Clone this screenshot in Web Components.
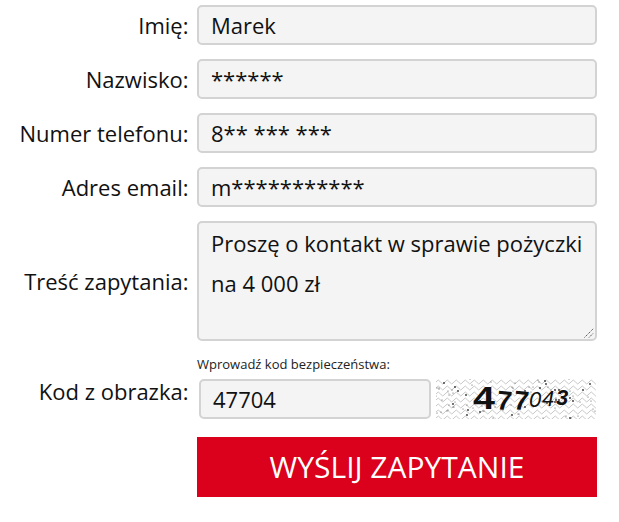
<!DOCTYPE html>
<html lang="pl">
<head>
<meta charset="utf-8">
<style>
  html, body { margin: 0; background: #fff; }
  body { font-family: "Open Sans", sans-serif; color: #111; }
</style>
</head>
<body>
<contact-form></contact-form>

<script>
class FormRow extends HTMLElement {
  constructor() {
    super();
    this.attachShadow({ mode: "open" });
    this.shadowRoot.innerHTML = `
      <style>
        :host { display: grid; grid-template-columns: 188.5px 400px; column-gap: 8.5px; align-items: center; }
        .label { text-align: right; font-size: 22px; line-height: 28px; color: #111; white-space: nowrap; }
      </style>
      <div class="label"><slot name="label"></slot></div>
      <div><slot></slot></div>
    `;
  }
}

class TextField extends HTMLElement {
  constructor() {
    super();
    this.attachShadow({ mode: "open" });
    this.shadowRoot.innerHTML = `
      <style>
        :host { display: block; box-sizing: border-box; height: 40px; padding: 0 12px;
          background: #f4f4f4; border: 2px solid #d3d3d3; border-radius: 5px;
          font-size: 22px; line-height: 36px; color: #111; white-space: nowrap; overflow: hidden; }
      </style>
      <slot></slot>
    `;
  }
}

class TextBox extends HTMLElement {
  constructor() {
    super();
    this.attachShadow({ mode: "open" });
    this.shadowRoot.innerHTML = `
      <style>
        :host { display: block; box-sizing: border-box; height: 120px; padding: 0 12px; position: relative;
          background: #f4f4f4; border: 2px solid #d3d3d3; border-radius: 5px;
          font-size: 22px; line-height: 40px; color: #111; }
        svg { position: absolute; right: 0; bottom: 0; }
      </style>
      <slot></slot>
      <svg width="12" height="12" viewBox="0 0 12 12">
        <path d="M1.5 10.5 L10.5 1.5 M6 10.5 L10.5 6" stroke="#444" stroke-width="1" stroke-dasharray="1.2 1" fill="none"/>
      </svg>
    `;
  }
}

class CaptchaImage extends HTMLElement {
  constructor() {
    super();
    this.attachShadow({ mode: "open" });
    let dots = "";
    let seed = 11;
    const rnd = n => {
      seed = (seed * 16807) % 2147483647;
      return seed % n;
    };
    for (let i = 0; i < 95; i++) {
      dots += `<circle cx="${rnd(160)}" cy="${rnd(40)}" r="${rnd(4) ? 0.5 : 0.9}" fill="#333"/>`;
    }
    this.shadowRoot.innerHTML = `
      <style>
        :host { display: block; width: 160px; height: 40px; }
        svg { display: block; }
        text { font-family: "Liberation Sans", sans-serif; fill: #111; }
      </style>
      <svg width="160" height="40" viewBox="0 0 160 40">
        <defs>
          <pattern id="w" width="9" height="6" patternUnits="userSpaceOnUse">
            <path d="M0 3 L2.25 1 L4.5 3 L6.75 5 L9 3" stroke="#c8c8c8" stroke-width="1" fill="none"/>
          </pattern>
        </defs>
        <rect width="160" height="40" fill="#fff"/>
        <rect width="160" height="40" fill="url(#w)"/>
        ${dots}
        <text x="37" y="30" font-size="31" font-weight="700" textLength="22" lengthAdjust="spacingAndGlyphs">4</text>
        <text x="60" y="30" font-size="27" font-weight="700" transform="rotate(6 60 30)">7</text>
        <text x="77" y="30" font-size="27" font-weight="700" transform="rotate(6 77 30)">7</text>
        <text x="93" y="28" font-size="22" font-style="italic">0</text>
        <text x="106" y="27" font-size="22" font-style="italic">4</text>
        <text x="120" y="26" font-size="22" font-style="italic" font-weight="700">3</text>
      </svg>
    `;
  }
}

class SubmitButton extends HTMLElement {
  constructor() {
    super();
    this.attachShadow({ mode: "open" });
    this.shadowRoot.innerHTML = `
      <style>
        :host { display: block; height: 60px; background: #db001b; color: #fff; text-align: center;
          font-size: 30px; line-height: 60px; }
      </style>
      <slot></slot>
    `;
  }
}

class ContactForm extends HTMLElement {
  constructor() {
    super();
    this.attachShadow({ mode: "open" });
    this.shadowRoot.innerHTML = `
      <style>
        :host { display: flex; flex-direction: column; gap: 14px; padding-top: 5px; width: 619px; }
        .hint { font-size: 13px; line-height: 16px; color: #222; margin-bottom: 7px; }
        .captcha { display: flex; gap: 5px; padding-left: 2px; }
        .captcha text-field { width: 232px; flex: none; }
        .code { margin-top: 1px; }
        .code [slot=label] { display: block; padding-top: 7px; }
        .send { margin-top: 4px; }
      </style>
      <form-row><span slot="label">Imię:</span><text-field>Marek</text-field></form-row>
      <form-row><span slot="label">Nazwisko:</span><text-field>******</text-field></form-row>
      <form-row><span slot="label">Numer telefonu:</span><text-field>8** *** ***</text-field></form-row>
      <form-row><span slot="label">Adres email:</span><text-field>m***********</text-field></form-row>
      <form-row><span slot="label">Treść zapytania:</span><text-box>Proszę o kontakt w sprawie pożyczki na 4 000 zł</text-box></form-row>
      <form-row class="code">
        <span slot="label">Kod z obrazka:</span>
        <div>
          <div class="hint">Wprowadź kod bezpieczeństwa:</div>
          <div class="captcha"><text-field>47704</text-field><captcha-image></captcha-image></div>
        </div>
      </form-row>
      <form-row class="send"><submit-button>WYŚLIJ ZAPYTANIE</submit-button></form-row>
    `;
  }
}

customElements.define("form-row", FormRow);
customElements.define("text-field", TextField);
customElements.define("text-box", TextBox);
customElements.define("captcha-image", CaptchaImage);
customElements.define("submit-button", SubmitButton);
customElements.define("contact-form", ContactForm);
</script>
</body>
</html>
